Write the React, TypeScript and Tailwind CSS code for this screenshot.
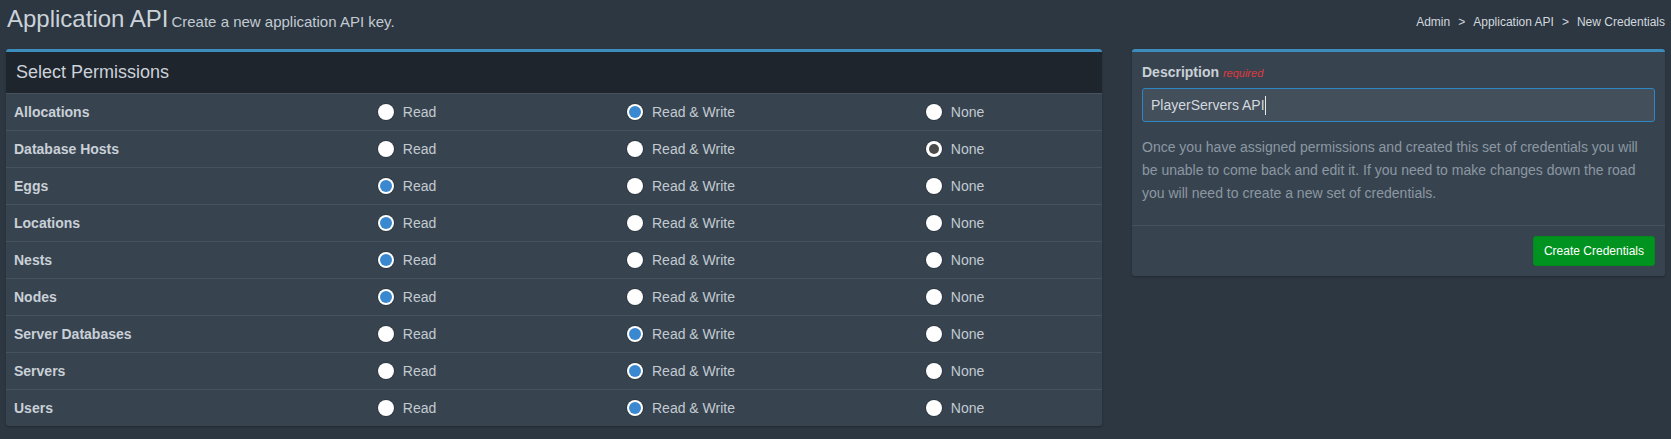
import React from 'react';

type Choice = 'r' | 'rw' | 'none';

const permissions: { name: string; value: Choice }[] = [
  { name: 'Allocations', value: 'rw' },
  { name: 'Database Hosts', value: 'none' },
  { name: 'Eggs', value: 'r' },
  { name: 'Locations', value: 'r' },
  { name: 'Nests', value: 'r' },
  { name: 'Nodes', value: 'r' },
  { name: 'Server Databases', value: 'rw' },
  { name: 'Servers', value: 'rw' },
  { name: 'Users', value: 'rw' },
];

const options: { key: Choice; label: string }[] = [
  { key: 'r', label: 'Read' },
  { key: 'rw', label: 'Read & Write' },
  { key: 'none', label: 'None' },
];

const Radio: React.FC<{ checked: boolean; muted?: boolean }> = ({ checked, muted }) => (
  <span className="w-4 h-4 rounded-full bg-white shadow-[0_0_0_1px_rgba(0,0,0,0.2)] flex items-center justify-center shrink-0">
    {checked && !muted && <span className="w-3 h-3 rounded-full bg-[#3a88d0]" />}
    {checked && muted && <span className="w-[10px] h-[10px] rounded-full bg-[#4b4b4b]" />}
  </span>
);

const App: React.FC = () => {
  return (
    <div className="min-h-screen bg-[#2c3742] px-[6px] font-['Liberation_Sans',Arial,sans-serif] text-[14px] text-[#c9d0d7]">
      <div className="flex justify-between items-start h-[49px] pt-[6px]">
        <div className="flex items-baseline pl-[1px]">
          <h1 className="text-[24px] leading-[26px] text-[#cbd2d9]">Application API</h1>
          <span className="ml-[3px] text-[15px] text-[#c3cad1]">Create a new application API key.</span>
        </div>
        <div className="mt-[8px] flex items-center gap-[8px] text-[12px] leading-[16px] text-[#d2d8de]">
          <span>Admin</span>
          <span>&gt;</span>
          <span>Application API</span>
          <span>&gt;</span>
          <span>New Credentials</span>
        </div>
      </div>

      <div className="flex items-start gap-[30px]">
        <div className="w-[1096px] bg-[#374450] border-t-[3px] border-[#3c8dbc] rounded-[3px] shadow-[0_1px_2px_rgba(0,0,0,0.25)]">
          <div className="h-[41px] bg-[#1e252d] flex items-center pl-[10px] text-[18px] text-[#cbd2d9]">
            Select Permissions
          </div>
          {permissions.map((p) => (
            <div key={p.name} className="grid grid-cols-4 items-center h-[37px] border-t border-[#46535f]">
              <div className="pl-[8px] font-bold text-[#c9d0d7]">{p.name}</div>
              {options.map((o) => (
                <div key={o.key} className="flex justify-center">
                  <label className="flex items-center pl-[5px] text-[#c3cad1]">
                    <span className="ml-[-25px] mr-[9px]">
                      <Radio checked={p.value === o.key} muted={o.key === 'none'} />
                    </span>
                    <span>{o.label}</span>
                  </label>
                </div>
              ))}
            </div>
          ))}
        </div>

        <div className="flex-1 bg-[#374450] border-t-[3px] border-[#3c8dbc] rounded-[3px] shadow-[0_1px_2px_rgba(0,0,0,0.25)]">
          <div className="px-[10px] pt-[10px] pb-[10px]">
            <div className="leading-[20px] mb-[5px]">
              <span className="font-bold text-[#c9d0d7]">Description</span>{' '}
              <span className="italic text-[11px] text-[#e0383e]">required</span>
            </div>
            <div className="h-[34px] border border-[#2f86c4] rounded-[3px] bg-[#434f5b] flex items-center px-[8px] text-[#d3d9df]">
              <span>PlayerServers API</span>
              <span className="w-px h-[19px] bg-[#e6e9ec]" />
            </div>
            <p className="mt-[14px] mb-[10px] leading-[23px] text-[#8c97a2]">
              Once you have assigned permissions and created this set of credentials you will be unable to come back and edit it. If you need to make changes down the road you will need to create a new set of credentials.
            </p>
          </div>
          <div className="border-t border-[#46535f] p-[10px] flex justify-end">
            <button className="h-[30px] px-[10px] text-[12px] text-white bg-[#01931f] border border-[#018a1c] rounded-[3px]">
              Create Credentials
            </button>
          </div>
        </div>
      </div>
    </div>
  );
};

export default App;
